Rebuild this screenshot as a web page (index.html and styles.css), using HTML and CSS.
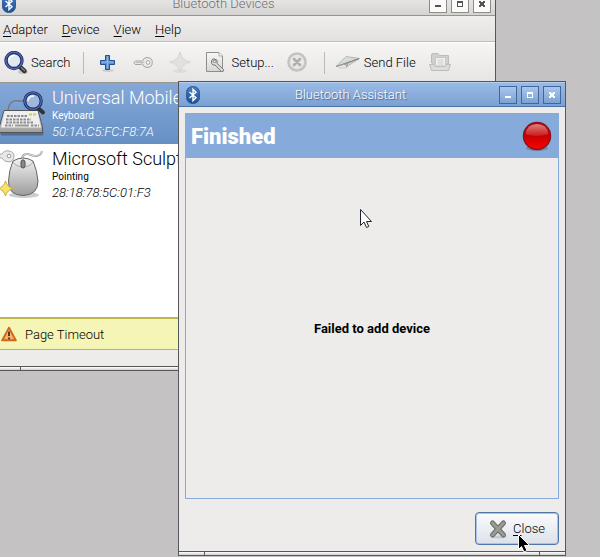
FILE: index.html
```html
<!DOCTYPE html>
<html lang="en">
<head>
    <meta charset="UTF-8">
    <meta name="viewport" content="width=device-width, initial-scale=1.0">
    <title>Bluetooth Devices</title>
    <link rel="stylesheet" href="styles.css">
</head>
<body>
    <svg width="0" height="0" class="defs" aria-hidden="true">
        <defs>
            <linearGradient id="bt-fill" x1="0" y1="0" x2="0" y2="1"><stop offset="0" stop-color="#4a7fbd"/><stop offset="1" stop-color="#1d4f94"/></linearGradient>
            <linearGradient id="metal" x1="0" y1="0" x2="0" y2="1"><stop offset="0" stop-color="#f2f2f2"/><stop offset="1" stop-color="#9c9c9c"/></linearGradient>
            <linearGradient id="pale" x1="0" y1="0" x2="0" y2="1"><stop offset="0" stop-color="#f8f8f7"/><stop offset="1" stop-color="#d6d6d4"/></linearGradient>
            <linearGradient id="led" x1="0" y1="0" x2="0" y2="1"><stop offset="0" stop-color="#b80000"/><stop offset="0.5" stop-color="#c80000"/><stop offset="1" stop-color="#ff0000"/></linearGradient>
            <linearGradient id="shine" x1="0" y1="0" x2="0" y2="1"><stop offset="0" stop-color="#fff" stop-opacity="0.5"/><stop offset="1" stop-color="#fff" stop-opacity="0.1"/></linearGradient>
            <linearGradient id="warn" x1="0" y1="0" x2="0" y2="1"><stop offset="0" stop-color="#f9a04a"/><stop offset="1" stop-color="#f07a1c"/></linearGradient>
            <symbol id="bluetooth" viewBox="0 0 14 18">
                <rect x="0.5" y="0.5" width="13" height="17" rx="6" fill="url(#bt-fill)" stroke="#2a5a9c"/>
                <path d="M3.5 6 L10 11.8 L7 14.7 V3.3 L10 6.2 L3.5 12" fill="none" stroke="#fff" stroke-width="1.4"/>
            </symbol>
            <symbol id="search" viewBox="0 0 24 24">
                <ellipse cx="19" cy="21" rx="5" ry="2" fill="#000" opacity="0.15"/>
                <path d="M15.5 15.5 L20.5 20" stroke="#333" stroke-width="4.4" stroke-linecap="round"/>
                <path d="M17.5 16.8 L20.5 19.5" stroke="#8a8577" stroke-width="1.5" stroke-linecap="round"/>
                <circle cx="10" cy="9.500" r="8" fill="#dce6f2" fill-opacity="0.75" stroke="#222c66" stroke-width="3.4"/>
                <circle cx="10" cy="9.500" r="8.2" fill="none" stroke="#5067b3" stroke-width="1.5"/>
                <path d="M5 9.500 Q5 4.500 11 4.500" fill="none" stroke="#fff" stroke-width="1.6"/>
            </symbol>
        </defs>
    </svg>

    <main class="desktop">
        <section class="window devices-window">
            <header class="titlebar inactive">
                <svg class="app-icon" width="14" height="18"><use href="#bluetooth"/></svg>
                <h1>Bluetooth Devices</h1>
                <button type="button" aria-label="Minimize"><svg width="8" height="8"><path d="M1 5h6v2h-6z"/></svg></button>
                <button type="button" aria-label="Maximize"><svg width="8" height="8"><path fill-rule="evenodd" d="M1 1h6v6h-6zM2 3v3h4v-3z"/></svg></button>
                <button type="button" aria-label="Close window"><svg width="8" height="8"><path d="M1 1h2v1h2v-1h2v2h-1v2h1v2h-2v-1h-2v1h-2v-2h1v-2h-1z"/></svg></button>
            </header>
            <nav class="menubar">
                <button type="button"><u>A</u>dapter</button>
                <button type="button"><u>D</u>evice</button>
                <button type="button"><u>V</u>iew</button>
                <button type="button"><u>H</u>elp</button>
            </nav>
            <div class="toolbar">
                <button type="button" class="search"><svg width="24" height="24"><use href="#search"/></svg>Search</button>
                <span class="separator"></span>
                <button type="button" aria-label="Add">
                    <svg width="16" height="24" viewBox="0 0 16 24"><ellipse cx="8" cy="19.500" rx="6" ry="1.500" fill="#000" opacity="0.12"/><path d="M5.500 4.500h4v5h5v4h-5v5h-4v-5h-5v-4h5z" fill="#5d94d3" stroke="#234f8c"/><path d="M7.500 5.500v12M1.500 11h12" stroke="#8db8e6"/></svg>
                </button>
                <button type="button" class="key" aria-label="Pair">
                    <svg width="20" height="24" viewBox="0 0 20 24"><path d="M9.500 10 Q10.500 6.500 14 6.500 Q19.300 6.500 19.300 11.500 Q19.300 16.500 14 16.500 Q10.500 16.500 9.500 13 H8 L7 14 L6 13 L5 14 L4 13 L3 14 L0.700 11.500 L2.500 10 Z" fill="#e6e6e4" stroke="#a5a5a2"/><path d="M3 11.500h8" stroke="#bbb"/><circle cx="15" cy="11.500" r="1.800" fill="#fff" stroke="#a5a5a2"/></svg>
                </button>
                <button type="button" aria-label="Trust" class="trust">
                    <svg width="22" height="24" viewBox="0 0 22 24"><ellipse cx="11" cy="20" rx="7" ry="2" fill="#000" opacity="0.05"/><path d="M11 1 Q12.500 6 14.500 8 Q17 10 21.500 11 Q17 12 14.500 14.500 Q12.500 16 11 21 Q9.500 16 7.500 14.500 Q5 12 0.500 11 Q5 10 7.500 8 Q9.500 6 11 1Z" fill="#e1e1de" stroke="#d6d6d2"/></svg>
                </button>
                <button type="button" class="setup">
                    <svg width="20" height="24" viewBox="0 0 20 24"><path d="M1.500 1.500H14L17.500 5V20.500H1.500Z" fill="url(#pale)" stroke="#8d8f8b"/><path d="M14 1.500V5H17.500" fill="#fff" stroke="#aaa"/><path d="M10 8 Q7 7 6.500 10 Q6.200 13 8 14 L10 14 L16.500 20.500 Q19 21 18.500 18.500 L12 12.500 Q13 9 10.500 8 L11 10.500 L9.500 12 L8.200 10.500 Z" fill="#ddd" stroke="#777"/></svg>
                    Setup...
                </button>
                <button type="button" aria-label="Remove">
                    <svg width="22" height="24" viewBox="0 0 22 24"><circle cx="11" cy="11" r="8.500" fill="#e9e7e6" stroke="#c8c1c1" stroke-width="2.600"/><path d="M8 8l6 6M14 8l-6 6" stroke="#b2adad" stroke-width="2.600" stroke-linecap="round"/></svg>
                </button>
                <span class="separator"></span>
                <button type="button" class="send">
                    <svg width="26" height="24" viewBox="0 0 26 24"><path d="M3 16h11l-3 1.500h-7z" fill="#000" opacity="0.1"/><path d="M1 15.500 L11 5.500 L24.500 7.500 L12 15.500 L9.500 13.500 Z" fill="#d9dbd8" stroke="#aaaca9" stroke-width="0.800"/><path d="M1 15.500 L24 7.500 L9.500 13.500 M11.500 15.500 L12.500 13" fill="none" stroke="#888a87"/></svg>
                    Send File
                </button>
                <button type="button" aria-label="Browse files">
                    <svg width="24" height="24" viewBox="0 0 24 24"><path d="M3.500 12V3.500Q3.500 2.500 5 2.500H10L11.500 4.500H20.500V13Z" fill="#d0d0ce" stroke="#bcbcba"/><path d="M7.500 6.500H17.500V15H7.500Z" fill="#f2f2f0" stroke="#c6c6c4"/><path d="M9.500 9h6M9.500 11h6M9.500 13h6" stroke="#ccc"/><path d="M1.500 13.500H6L7.500 15.500H17L18.500 13.500H22.500L20.500 19.500H3.500Z" fill="#dcdcda" stroke="#bdbdbb"/></svg>
                </button>
            </div>
            <ul class="device-list">
                <li class="device selected">
                    <svg width="52" height="56" viewBox="0 0 52 56">
                        <path d="M13 25 Q14 13 24 15 Q29 16 30 12" fill="none" stroke="#777" stroke-width="1.300"/>
                        <path d="M5 46 H49 L48 49.500 H6Z" fill="#000" opacity="0.25"/>
                        <path d="M9 24.500 H43 L47.500 41 V46.500 H4 V42Z" fill="url(#metal)" stroke="#555"/>
                        <path d="M10 25.500 H42 L46 41.500 H6Z" fill="#eee"/>
                        <path d="M12 30H33M11 33.500H36M11 36.500H39M10 39.500H18M36 39.500H44" stroke="#8c8c8c" stroke-width="2.200" stroke-dasharray="2.500 1"/>
                        <path d="M20 39.500H34" stroke="#999" stroke-width="2"/>
                        <path d="M34 28.500h3m1 0h3" stroke="#e2cf22" stroke-width="2"/>
                        <path d="M43 22 L48 26.500" stroke="#333" stroke-width="4" stroke-linecap="round"/>
                        <circle cx="38" cy="15" r="8.200" fill="#a9c0df" fill-opacity="0.75" stroke="#1c2d6b" stroke-width="3.200"/>
                        <circle cx="38" cy="15" r="8.300" fill="none" stroke="#5872b4" stroke-width="1.200"/>
                        <path d="M33 15 Q33 10 39 10" fill="none" stroke="#e9f0f8" stroke-width="1.800"/>
                    </svg>
                    <div>
                        <h2>Universal Mobile Keyboard</h2>
                        <p class="kind">Keyboard</p>
                        <p class="address">50:1A:C5:FC:F8:7A</p>
                    </div>
                </li>
                <li class="device">
                    <svg width="52" height="56" viewBox="0 0 52 56">
                        <path d="M28 18 Q25 6 33 7 Q45 12 47 4" fill="none" stroke="#999" stroke-width="2"/>
                        <path d="M28 18 Q25 6 33 7 Q45 12 47 4" fill="none" stroke="#eee" stroke-width="0.800"/>
                        <path d="M2 7h5q2-4 7-3q5 1 5 5q0 5-5 6q-5 0-7-4h-5z" fill="#e8e8e8" stroke="#aaa"/><circle cx="14" cy="9" r="1.800" fill="#fff" stroke="#999"/>
                        <ellipse cx="29" cy="48" rx="15" ry="3" fill="#000" opacity="0.2"/>
                        <path d="M18 14 Q28 8 38 14 Q42 23 43 34 Q43 48 28 48.500 Q13 48 13.500 34 Q14 23 18 14Z" fill="url(#metal)" stroke="#666"/>
                        <path d="M18 15 Q21 20 28 20 Q35 20 38 15M28 11V20" fill="none" stroke="#aaa"/>
                        <rect x="26" y="13" width="4" height="8" rx="2" fill="#888" stroke="#555"/>
                        <path d="M10.500 34 Q12 40 18 41.500 Q12 43 10.500 49 Q9 43 3 41.500 Q9 40 10.500 34Z" fill="#f7e36b" stroke="#d0a92c"/>
                    </svg>
                    <div>
                        <h2>Microsoft Sculpt Mouse</h2>
                        <p class="kind">Pointing</p>
                        <p class="address">28:18:78:5C:01:F3</p>
                    </div>
                </li>
            </ul>
            <div class="infobar" role="status">
                <svg width="16" height="16" viewBox="0 0 16 16"><path d="M8 1.500 L15 14.500 H1Z" fill="url(#warn)" stroke="#d0661a" stroke-width="1.600" stroke-linejoin="round"/><path d="M8 4 L12.800 13 H3.200Z" fill="#fbc28c" opacity="0.7"/><path d="M8 5.500V10M8 11.500v1.700" stroke="#333" stroke-width="1.800"/></svg>
                Page Timeout
            </div>
            <div class="statusbar"></div>
            <div class="resize-handle"></div>
        </section>

        <section class="window assistant-window" role="dialog" aria-labelledby="assistant-title">
            <header class="titlebar">
                <svg class="app-icon" width="14" height="18"><use href="#bluetooth"/></svg>
                <h1 id="assistant-title">Bluetooth Assistant</h1>
                <button type="button" aria-label="Minimize"><svg width="8" height="8"><path d="M1 5h6v2h-6z"/></svg></button>
                <button type="button" aria-label="Maximize"><svg width="8" height="8"><path fill-rule="evenodd" d="M1 1h6v6h-6zM2 3v3h4v-3z"/></svg></button>
                <button type="button" aria-label="Close window"><svg width="8" height="8"><path d="M1 1h2v1h2v-1h2v2h-1v2h1v2h-2v-1h-2v1h-2v-2h1v-2h-1z"/></svg></button>
            </header>
            <div class="assistant-body">
                <div class="page">
                    <div class="page-header">
                        <h2>Finished</h2>
                        <svg width="32" height="32" viewBox="0 0 32 32"><ellipse cx="16" cy="28" rx="11" ry="3" fill="#000" opacity="0.2"/><circle cx="16" cy="16" r="13.500" fill="url(#led)" stroke="#8c1420" stroke-width="1.500"/><path d="M4.500 14 Q6 4 16 4 Q26 4 27.500 14 Q16 18 4.500 14Z" fill="url(#shine)"/></svg>
                    </div>
                    <p class="message">Failed to add device</p>
                </div>
                <div class="actions">
                    <button type="button" class="close-button">
                        <svg width="20" height="20" viewBox="0 0 20 20"><ellipse cx="11" cy="18" rx="8" ry="1.500" fill="#000" opacity="0.12"/><path d="M4.500 4L15.500 16M15.500 4L4.500 16" stroke="#6a6c66" stroke-width="5" stroke-linecap="round"/><path d="M4.500 4L15.500 16M15.500 4L4.500 16" stroke="#999b94" stroke-width="3" stroke-linecap="round"/></svg>
                        <span><u>C</u>lose</span>
                    </button>
                </div>
            </div>
            <div class="resize-handle"></div>
        </section>

        <svg class="cursor cursor-light" width="14" height="21" viewBox="0 0 14 21"><path d="M1.500 1.500V17.500L5 14L7.500 19.500L9.800 18.500L7.500 13.500H12.500Z" fill="#fff" stroke="#223"/></svg>
        <svg class="cursor cursor-dark" width="14" height="21" viewBox="0 0 14 21"><path d="M0.500 0.500V15.500L3.500 12.500L6 18L9 16.500L6.500 11.500H11.500Z" fill="#000" stroke="#fff"/></svg>
    </main>
</body>
</html>
```
FILE: styles.css
```css
* {
    box-sizing: border-box;
}
body {
    margin: 0;
    font-family: Roboto, sans-serif;
    font-size: 13px;
    font-weight: 300;
    color: #000;
}
h1, h2, p, ul {
    margin: 0;
    padding: 0;
}
button {
    font: inherit;
    color: inherit;
    background: none;
    border: none;
    padding: 0;
}
svg {
    display: block;
    flex: none;
}
.defs {
    position: absolute;
}
.desktop {
    position: relative;
    height: 100vh;
    overflow: hidden;
    background-color: #c4c2c3;
}
.window {
    position: absolute;
    display: flex;
    flex-direction: column;
    border: 1px solid #55575b;
    background-color: #edeceb;
}
.devices-window {
    top: -10px;
    left: -6px;
    right: 104px;
    bottom: 186px;
}
.assistant-window {
    top: 81px;
    left: 178px;
    right: 34px;
    bottom: 1px;
}

/* title bars */
.titlebar {
    display: flex;
    align-items: center;
    gap: 4px;
    height: 25px;
    flex: none;
    padding: 0 4px 0 7px;
    color: #fff;
    background: linear-gradient(#99bae6, #7ba1d2);
    border-top: 1px solid #b4d0f1;
    border-bottom: 1px solid #4a72a8;
}
.titlebar h1 {
    flex: 1;
    padding-left: 2px;
    font-size: 13px;
    font-weight: 300;
    text-align: center;
    text-shadow: 1px 1px 1px #3d5f8f;
}
.titlebar button {
    display: grid;
    place-items: center;
    width: 18px;
    height: 18px;
    border: 1px solid #40669b;
    background: linear-gradient(#a9c6ec, #7ba2d4);
    fill: #fff;
}
.titlebar.inactive {
    color: #6c7076;
    background: linear-gradient(#efeeed, #d5d4d2);
    border-top-color: #fff;
    border-bottom-color: #96948f;
}
.inactive h1 {
    text-shadow: none;
}
.inactive button {
    border-color: #8e8c84;
    background: #fafafa;
    fill: #555;
}

/* menu and toolbar */
.menubar {
    display: flex;
    gap: 14px;
    height: 26px;
    flex: none;
    padding: 2px 8px 0;
    background: linear-gradient(#efeeed, #e2e1df);
    border-bottom: 1px solid #bfbdba;
}
u {
    text-underline-offset: 2px;
}
.toolbar {
    display: flex;
    align-items: center;
    height: 41px;
    flex: none;
    padding: 0 9px;
    background: linear-gradient(#f6f5f4, #e6e5e3);
    border-top: 1px solid #fff;
    border-bottom: 1px solid #9b978f;
}
.toolbar button {
    display: flex;
    align-items: center;
    gap: 3px;
    margin-right: 16px;
    white-space: nowrap;
}
.toolbar .search {
    margin-right: 12px;
}
.toolbar .key {
    margin-left: 1px;
}
.toolbar .trust {
    margin-right: 14px;
}
.toolbar .setup {
    gap: 7px;
    margin-right: 12px;
}
.toolbar .send {
    gap: 3px;
    margin-left: -6px;
    margin-right: 12px;
}
.separator {
    width: 1px;
    height: 22px;
    margin-right: 16px;
    background-color: #bbb9b6;
}

/* device list */
.device-list {
    flex: 1;
    list-style: none;
    background-color: #fff;
    overflow: hidden;
}
.device {
    display: flex;
    align-items: center;
    gap: 5px;
    height: 61px;
}
.device.selected {
    color: #fff;
    background: linear-gradient(#85a8d8, #6690c4);
}
.device h2 {
    font-size: 18px;
    line-height: 22px;
    font-weight: 300;
    white-space: nowrap;
}
.device .kind {
    font-size: 10px;
    line-height: 14px;
    font-weight: 400;
}
.device .address {
    font-size: 13px;
    line-height: 18px;
    font-style: italic;
}
.infobar {
    display: flex;
    align-items: center;
    gap: 8px;
    height: 33px;
    flex: none;
    padding: 0 6px;
    background-color: #f5f5b5;
    border-top: 2px solid #bcb84c;
    border-bottom: 1px solid #bcb84c;
}
.statusbar {
    height: 16px;
    flex: none;
}
.resize-handle {
    height: 4px;
    flex: none;
    padding: 0 25px;
    border-top: 1px solid #55575b;
    background: linear-gradient(#fff, #cfcfcf);
}
.resize-handle::before {
    content: "";
    display: block;
    height: 3px;
    border: solid #55575b;
    border-width: 0 1px;
}

/* assistant */
.assistant-body {
    display: flex;
    flex-direction: column;
    flex: 1;
    gap: 13px;
    padding: 6px;
}
.page {
    display: flex;
    flex-direction: column;
    flex: 1;
    border: 1px solid #86aad9;
}
.page-header {
    display: flex;
    align-items: center;
    justify-content: space-between;
    height: 44px;
    padding: 0 5px;
    color: #fff;
    background-color: #86aad9;
}
.page-header h2 {
    font-size: 22px;
    font-weight: 900;
}
.message {
    display: grid;
    place-items: center;
    flex: 1;
    font-weight: 700;
}
.actions {
    display: flex;
    justify-content: flex-end;
}
.close-button {
    display: flex;
    align-items: center;
    gap: 5px;
    height: 33px;
    padding: 0 13px 0 12px;
    border: 1px solid #4f77aa;
    border-radius: 4px;
    box-shadow: inset 0 0 0 1px #a9c3e4;
    background: linear-gradient(#fbfcfd, #dce1e9);
}

/* pointers */
.cursor {
    position: absolute;
}
.cursor-light {
    top: 208px;
    left: 359px;
}
.cursor-dark {
    top: 534px;
    left: 518px;
}
```
